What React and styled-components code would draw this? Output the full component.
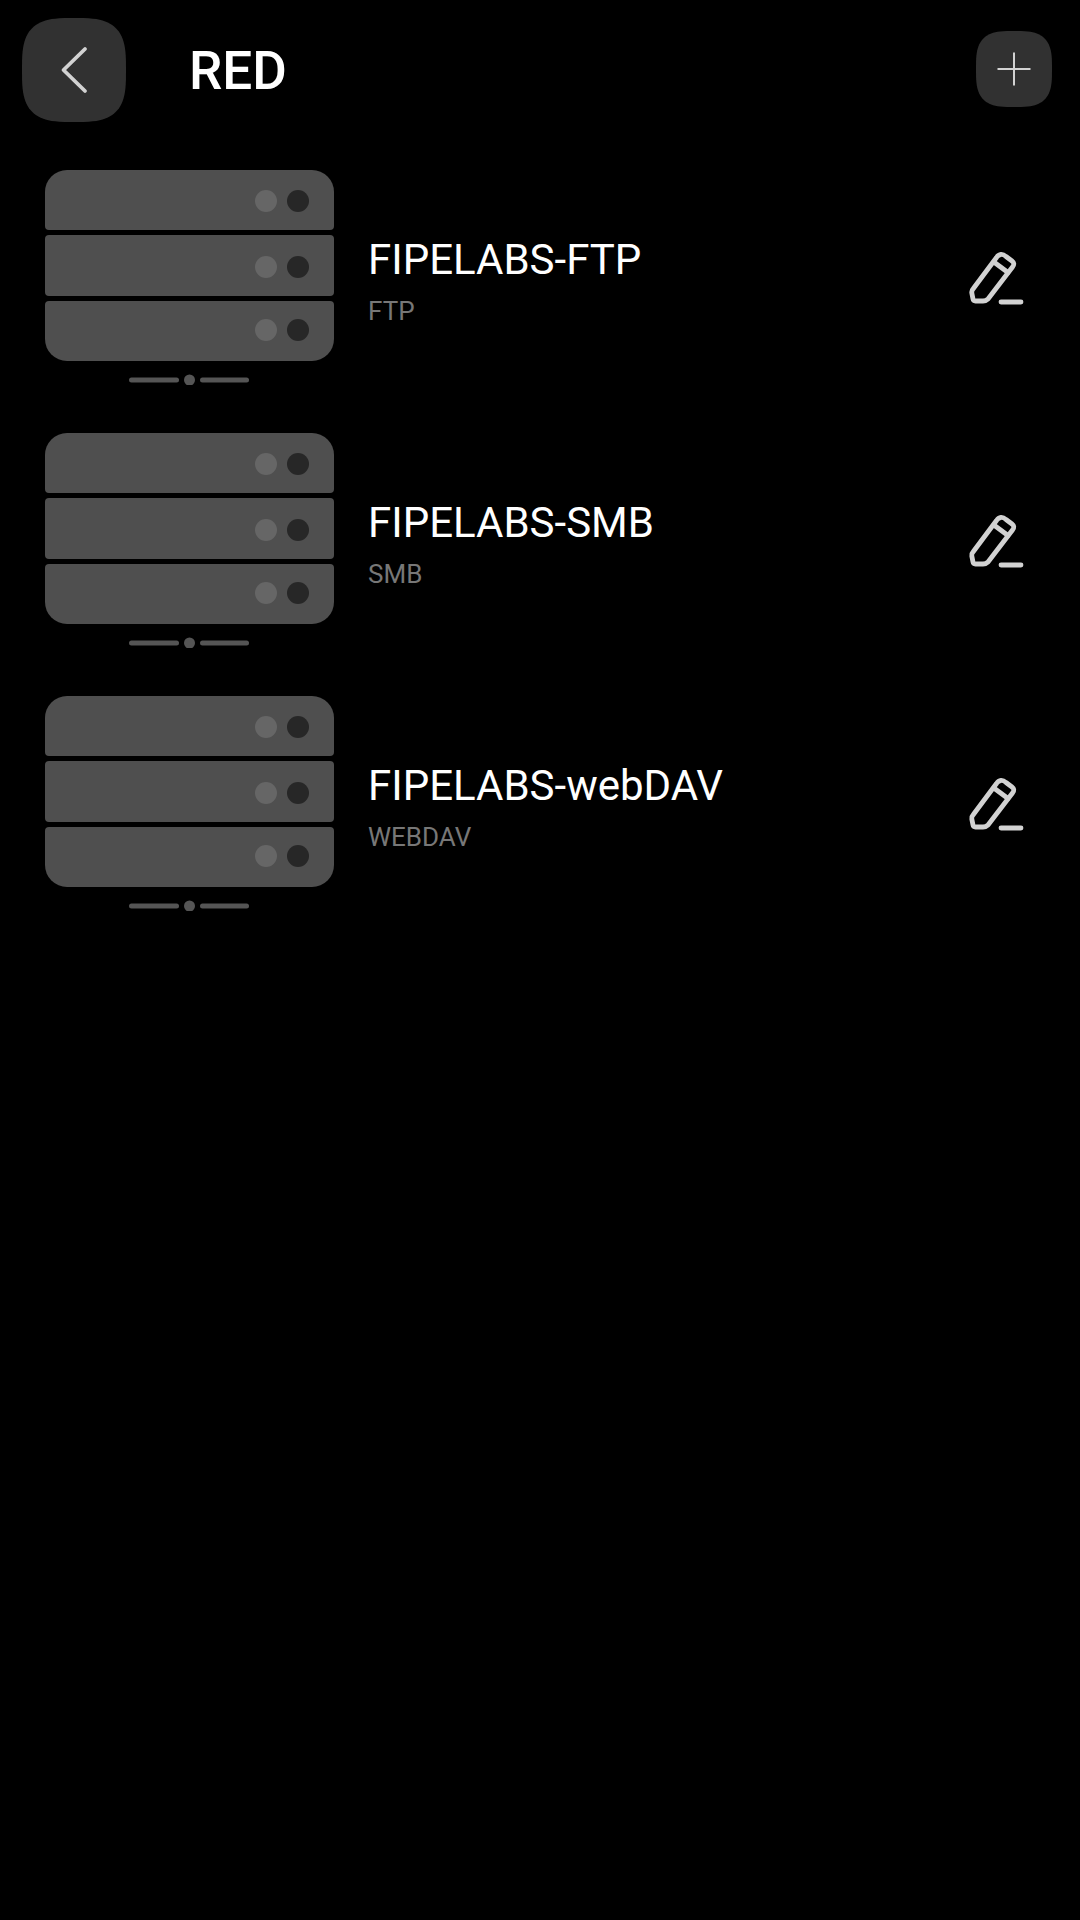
import React from "react";
import styled, { createGlobalStyle } from "styled-components";

const Global = createGlobalStyle`
  html, body { margin: 0; padding: 0; background: #000; }
  body { font-family: Roboto, "Liberation Sans", sans-serif; }
`;

const superellipse = (s) => {
  const n = 3.2;
  const pts = [];
  for (let i = 0; i < 96; i++) {
    const t = (i / 96) * 2 * Math.PI;
    const c = Math.cos(t);
    const d = Math.sin(t);
    const x = (s / 2) * (1 + Math.sign(c) * Math.pow(Math.abs(c), 2 / n));
    const y = (s / 2) * (1 + Math.sign(d) * Math.pow(Math.abs(d), 2 / n));
    pts.push(`${x.toFixed(2)} ${y.toFixed(2)}`);
  }
  return `M${pts.join("L")}Z`;
};

const Page = styled.div`
  width: 1080px;
  min-height: 1920px;
  background: #000;
  color: #fff;
  display: flex;
  flex-direction: column;
`;

const Toolbar = styled.header`
  display: flex;
  align-items: center;
  height: 104px;
  margin-top: 18px;
  padding: 0 28px 0 22px;
`;

const RoundButton = styled.button`
  width: ${(p) => p.$size}px;
  height: ${(p) => p.$size}px;
  flex: none;
  padding: 0;
  border: 0;
  margin-bottom: ${(p) => p.$lift || 0}px;
  background: #313131;
  color: #d2d2d2;
  display: flex;
  align-items: center;
  justify-content: center;
  clip-path: path("${(p) => superellipse(p.$size)}");
`;

const Title = styled.h1`
  margin: 2px auto 0 63px;
  font-size: 53px;
  font-weight: 500;
  line-height: 1;
`;

const List = styled.ul`
  list-style: none;
  margin: 48px 0 0;
  padding: 0 56px 0 45px;
  display: flex;
  flex-direction: column;
  gap: 48px;
`;

const Row = styled.li`
  display: flex;
  align-items: center;
  height: 215px;
`;

const ServerArt = styled.svg`
  width: 289px;
  height: 215px;
  flex: none;
  display: block;
`;

const Info = styled.div`
  flex: 1;
  margin-left: 34px;
  display: flex;
  flex-direction: column;
  padding-top: 6px;
`;

const Name = styled.div`
  font-size: 42px;
  line-height: 48px;
  font-weight: 400;
`;

const Kind = styled.div`
  margin-top: 12px;
  font-size: 26px;
  line-height: 30px;
  color: #777;
`;

const EditIcon = styled.svg`
  width: 56px;
  height: 56px;
  flex: none;
  display: block;
  color: #d2d2d2;
`;

const Server = () => (
  <ServerArt viewBox="0 0 289 215" aria-hidden="true">
    <path fill="#4f4f4f" d="M22 0H267A22 22 0 0 1 289 22V56A4 4 0 0 1 285 60H4A4 4 0 0 1 0 56V22A22 22 0 0 1 22 0Z" />
    <rect fill="#4f4f4f" x="0" y="65" width="289" height="61" rx="4" />
    <path fill="#4f4f4f" d="M4 131H285A4 4 0 0 1 289 135V169A22 22 0 0 1 267 191H22A22 22 0 0 1 0 169V135A4 4 0 0 1 4 131Z" />
    {[31, 97, 160].map((y) => (
      <g key={y}>
        <circle cx="221" cy={y} r="11" fill="#666" />
        <circle cx="253" cy={y} r="11" fill="#272727" />
      </g>
    ))}
    <rect x="84" y="207.500" width="50" height="5" rx="2.500" fill="#555" />
    <circle cx="144.500" cy="210" r="5.500" fill="#555" />
    <rect x="155" y="207.500" width="49" height="5" rx="2.500" fill="#555" />
  </ServerArt>
);

const Pencil = () => (
  <EditIcon viewBox="0 0 56 56" fill="none" stroke="currentColor" strokeWidth="4.800" strokeLinecap="round" strokeLinejoin="round" aria-hidden="true">
    <path d="M28.500 7.500L5 39C4 40 3.500 41 3.800 43L5 49C5.200 50.500 6 51 7.500 51L15 51C17.500 51 19 50 20 49L44.500 17C46.500 14.500 46 12.500 44 11L38 6.500C34.500 3.500 31 3.800 28.500 7.500Z" />
    <path d="M26.500 12.500L40 22.500" />
    <path d="M33 52H53" />
  </EditIcon>
);

const servers = [
  { name: "FIPELABS-FTP", kind: "FTP" },
  { name: "FIPELABS-SMB", kind: "SMB" },
  { name: "FIPELABS-webDAV", kind: "WEBDAV" },
];

export default function App() {
  return (
    <Page>
      <Global />
      <Toolbar>
        <RoundButton $size={104} aria-label="Back">
          <svg width="44" height="56" viewBox="0 0 44 56" fill="none" stroke="currentColor" strokeWidth="3.800" strokeLinecap="round" strokeLinejoin="round">
            <path d="M33 7L11.500 28L33 49" />
          </svg>
        </RoundButton>
        <Title>RED</Title>
        <RoundButton $size={76} $lift={2} aria-label="Add">
          <svg width="36" height="36" viewBox="0 0 36 36" fill="none" stroke="currentColor" strokeWidth="2">
            <path d="M18 1.500V34.500M1.500 18H34.500" />
          </svg>
        </RoundButton>
      </Toolbar>
      <List>
        {servers.map((s) => (
          <Row key={s.name}>
            <Server />
            <Info>
              <Name>{s.name}</Name>
              <Kind>{s.kind}</Kind>
            </Info>
            <Pencil />
          </Row>
        ))}
      </List>
    </Page>
  );
}
